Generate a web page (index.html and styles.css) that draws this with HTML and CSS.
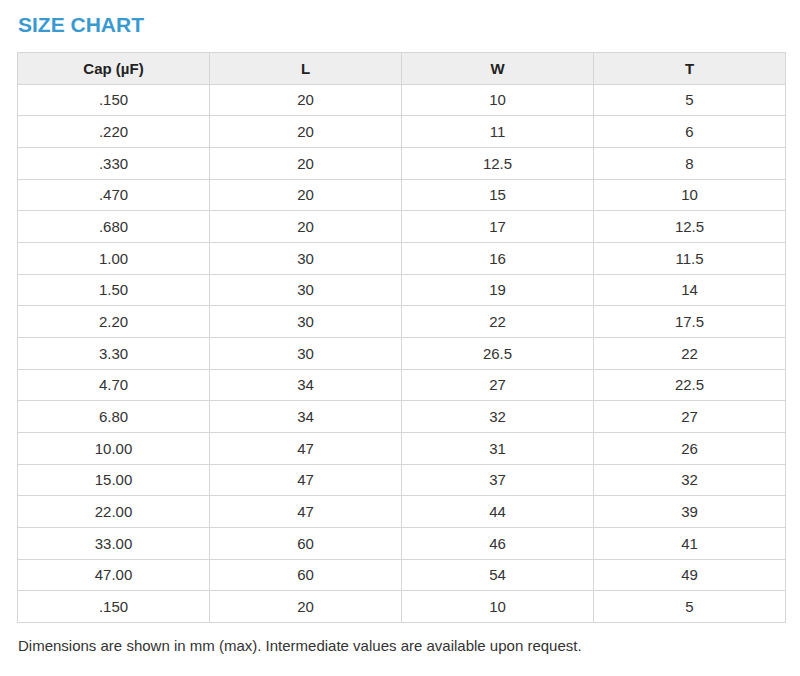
FILE: index.html
```html
<!DOCTYPE html>
<html>
<head>
<meta charset="utf-8">
<link rel="stylesheet" href="styles.css">
</head>
<body>
<div class="page">
  <h2 class="title">SIZE CHART</h2>
  <table class="chart">
    <thead>
      <tr><th>Cap (µF)</th><th>L</th><th>W</th><th>T</th></tr>
    </thead>
    <tbody>
      <tr><td>.150</td><td>20</td><td>10</td><td>5</td></tr>
      <tr><td>.220</td><td>20</td><td>11</td><td>6</td></tr>
      <tr><td>.330</td><td>20</td><td>12.5</td><td>8</td></tr>
      <tr><td>.470</td><td>20</td><td>15</td><td>10</td></tr>
      <tr><td>.680</td><td>20</td><td>17</td><td>12.5</td></tr>
      <tr><td>1.00</td><td>30</td><td>16</td><td>11.5</td></tr>
      <tr><td>1.50</td><td>30</td><td>19</td><td>14</td></tr>
      <tr><td>2.20</td><td>30</td><td>22</td><td>17.5</td></tr>
      <tr><td>3.30</td><td>30</td><td>26.5</td><td>22</td></tr>
      <tr><td>4.70</td><td>34</td><td>27</td><td>22.5</td></tr>
      <tr><td>6.80</td><td>34</td><td>32</td><td>27</td></tr>
      <tr><td>10.00</td><td>47</td><td>31</td><td>26</td></tr>
      <tr><td>15.00</td><td>47</td><td>37</td><td>32</td></tr>
      <tr><td>22.00</td><td>47</td><td>44</td><td>39</td></tr>
      <tr><td>33.00</td><td>60</td><td>46</td><td>41</td></tr>
      <tr><td>47.00</td><td>60</td><td>54</td><td>49</td></tr>
      <tr><td>.150</td><td>20</td><td>10</td><td>5</td></tr>
    </tbody>
  </table>
  <p class="note">Dimensions are shown in mm (max). Intermediate values are available upon request.</p>
</div>
</body>
</html>
```

FILE: styles.css
```css
html, body {
  margin: 0;
  padding: 0;
  background: #ffffff;
}
.page {
  padding: 12px 14px 0 17px;
  font-family: "Liberation Sans", Arial, sans-serif;
  color: #333333;
}
.title {
  margin: 0 0 15px 1px;
  font-size: 21px;
  line-height: 25px;
  font-weight: bold;
  color: #3a9ad0;
}
.chart {
  width: 769px;
  border-collapse: collapse;
  table-layout: fixed;
  font-size: 15px;
}
.chart th, .chart td {
  border: 1px solid #d6d6d6;
  text-align: center;
  padding: 0;
  height: 30.67px;
}
.chart th {
  background: #eeeeee;
  font-weight: bold;
  color: #222222;
}
.note {
  margin: 14px 0 0 1px;
  font-size: 15px;
  line-height: 17px;
  color: #333333;
}
```
